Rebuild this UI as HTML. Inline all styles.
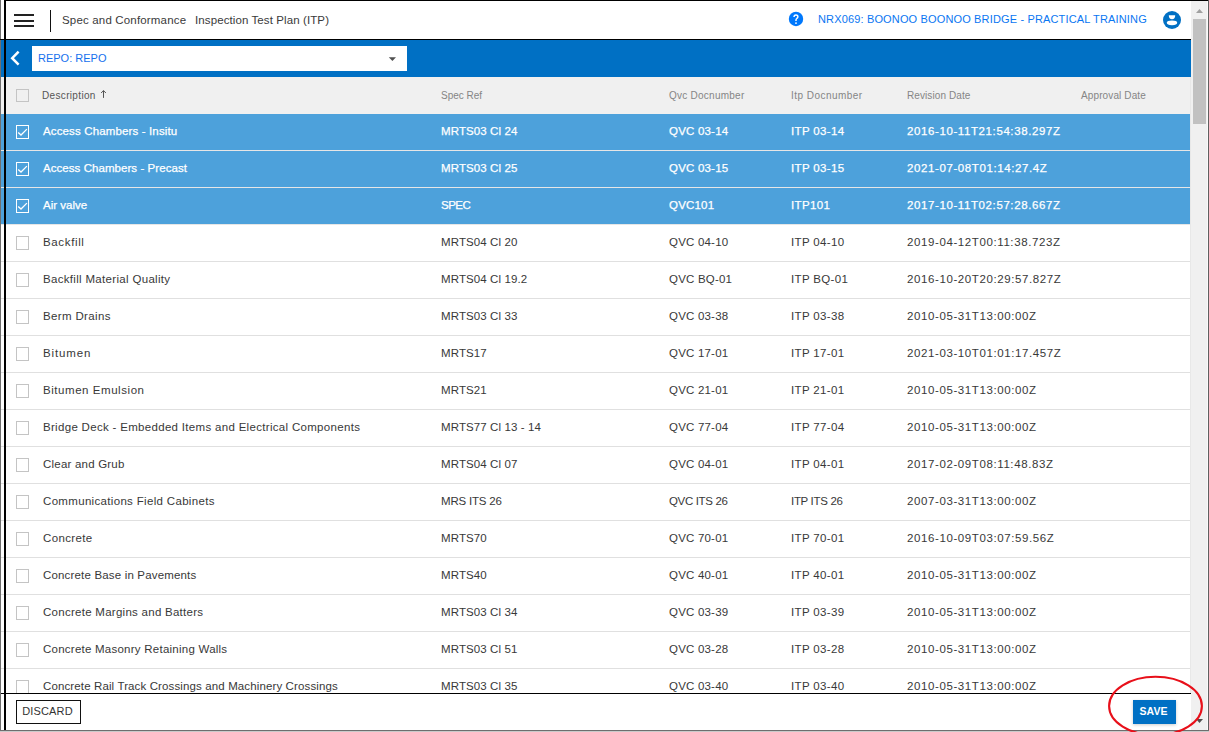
<!DOCTYPE html>
<html><head><meta charset="utf-8"><style>
*{margin:0;padding:0;box-sizing:border-box}
html,body{width:1209px;height:732px;overflow:hidden;background:#fff;font-family:"Liberation Sans",sans-serif}
.abs{position:absolute}
#top{position:absolute;left:0;top:0;width:1191px;height:40px;background:#fff}
.ham{position:absolute;left:14px;width:20px;height:2px;background:#222}
#vsep{position:absolute;left:50px;top:10px;width:1px;height:22px;background:#111}
.title{position:absolute;top:12px;font-size:11.5px;color:#3a3a3a;white-space:pre;line-height:16px;letter-spacing:0.17px}
#proj{position:absolute;left:818px;top:11px;font-size:11px;color:#0a76f2;white-space:pre;line-height:16px;letter-spacing:0.15px}
#bluebar{position:absolute;left:0;top:40px;width:1191px;height:37px;background:#0070c4}
#repo{position:absolute;left:32px;top:46px;width:375px;height:25px;background:#fff}
#repo span{position:absolute;left:6px;top:4px;font-size:11px;color:#1570ee;line-height:16px}
#thead{position:absolute;left:0;top:77px;width:1190px;height:37px;background:#f0f0f0}
.h{position:absolute;top:12px;font-size:10px;color:#858585;line-height:14px;white-space:pre}
.row{position:absolute;left:0;width:1190px;height:37px;background:#fff;border-bottom:1px solid #e0e0e0}
.row.sel{background:#4da1db;border-bottom:1px solid #e6e6e6}
.c{position:absolute;top:9px;font-size:11.5px;line-height:16px;color:#383838;white-space:pre}
.sel .c{color:#fff;-webkit-text-stroke:0.25px #fff}
.cb{position:absolute;left:16px;top:11px;width:13px;height:13px;border:1px solid #c4c4c4;background:transparent}
.sel .cb{border:1.5px solid #fff;background:transparent}
.ck{position:absolute;left:16px;top:11px}
#footer{position:absolute;left:0;top:694px;width:1191px;height:36px;background:#fff}
#fline{position:absolute;left:0;top:693px;width:1191px;height:1px;background:#000}
#discard{position:absolute;left:16px;top:700px;width:65px;height:24px;border:1px solid #111;font-size:11px;color:#333;text-align:center;line-height:20px;padding-right:2px;background:#fff;letter-spacing:0.15px}
#save{position:absolute;left:1133px;top:700px;width:43px;height:24px;background:#0070c4;color:#fff;font-size:10.5px;font-weight:bold;text-align:center;line-height:22px;padding-right:2px;box-shadow:0 1px 3px rgba(0,0,0,.2)}
#sb{position:absolute;left:1191px;top:0;width:17px;height:730px;background:#f0f0f0}
#thumb{position:absolute;left:1193px;top:19px;width:13px;height:105px;background:#c1c1c1}
</style></head><body>
<div id="top">
 <div class="ham" style="top:14px"></div><div class="ham" style="top:20px"></div><div class="ham" style="top:25px"></div>
 <div id="vsep"></div>
 <div class="title" style="left:62px">Spec and Conformance</div><div class="title" style="left:195px;letter-spacing:0.1px">Inspection Test Plan (ITP)</div>
 <svg class="abs" style="left:788px;top:11px" width="16" height="16" viewBox="0 0 16 16"><circle cx="8" cy="7.95" r="7.2" fill="#0078fc"/><path d="M6 6.1 C6 4.7 6.9 3.9 8 3.9 C9.1 3.9 9.9 4.7 9.9 5.7 C9.9 6.7 9.2 7.1 8.7 7.5 C8.1 7.9 8 8.3 8 9.2 V9.9" fill="none" stroke="#fff" stroke-width="1.45"/><circle cx="8" cy="12.1" r="0.95" fill="#fff"/></svg>
 <div id="proj">NRX069: BOONOO BOONOO BRIDGE - PRACTICAL TRAINING</div>
 <svg class="abs" style="left:1163px;top:11px" width="18" height="18" viewBox="0 0 18 18"><circle cx="9" cy="9" r="9" fill="#0070c4"/><path d="M5.8 4.2 H12.2 Q12.2 8.2 9 8.2 Q5.8 8.2 5.8 4.2Z" fill="#fff"/><ellipse cx="9" cy="11.8" rx="5.2" ry="2.4" fill="#fff"/></svg>
</div>
<div id="bluebar">
 <svg class="abs" style="left:9px;top:10px" width="12" height="16" viewBox="0 0 12 16"><path d="M9.6 1.6 L3.2 8.2 L9.6 14.6" fill="none" stroke="#fff" stroke-width="2.5"/></svg>
</div>
<div id="repo"><span>REPO: REPO</span>
 <svg class="abs" style="left:356px;top:11px" width="9" height="5" viewBox="0 0 9 5"><path d="M0.8 0.2 L8 0.2 L4.4 4.1Z" fill="#505050"/></svg>
</div>
<div id="thead">
 <div class="cb" style="top:12px"></div>
 <span class="h" style="left:42px;color:#555;letter-spacing:0.34px">Description</span><svg class="abs" style="left:100px;top:13px" width="7" height="9" viewBox="0 0 7 9"><path d="M3.5 0.6 V7.9 M1.1 3 L3.5 0.6 L5.9 3" fill="none" stroke="#555" stroke-width="1"/></svg>
 <span class="h" style="left:441px">Spec Ref</span>
 <span class="h" style="left:669px;letter-spacing:0.25px">Qvc Docnumber</span>
 <span class="h" style="left:791px;letter-spacing:0.46px">Itp Docnumber</span>
 <span class="h" style="left:907px;letter-spacing:0.09px">Revision Date</span>
 <span class="h" style="left:1081px;letter-spacing:0.12px">Approval Date</span>
</div>
<div class="row sel" style="top:114px"><div class="cb" style="height:14px"></div><svg class="ck" width="14" height="14" viewBox="0 0 14 14"><path d="M2.2 7.4 L5 10 L10.9 4.1" fill="none" stroke="#fff" stroke-width="1.3"/></svg><span class="c c0" style="left:43px;letter-spacing:0.139px">Access Chambers - Insitu</span><span class="c c1" style="left:441px;letter-spacing:0.1px">MRTS03 Cl 24</span><span class="c c2" style="left:669px;letter-spacing:0.2px">QVC 03-14</span><span class="c c3" style="left:791px;letter-spacing:0.35px">ITP 03-14</span><span class="c c4" style="left:907px;letter-spacing:0.6px">2016-10-11T21:54:38.297Z</span></div>
<div class="row sel" style="top:151px"><div class="cb" style="height:14px"></div><svg class="ck" width="14" height="14" viewBox="0 0 14 14"><path d="M2.2 7.4 L5 10 L10.9 4.1" fill="none" stroke="#fff" stroke-width="1.3"/></svg><span class="c c0" style="left:43px;letter-spacing:0.058px">Access Chambers - Precast</span><span class="c c1" style="left:441px;letter-spacing:0.1px">MRTS03 Cl 25</span><span class="c c2" style="left:669px;letter-spacing:0.2px">QVC 03-15</span><span class="c c3" style="left:791px;letter-spacing:0.35px">ITP 03-15</span><span class="c c4" style="left:907px;letter-spacing:0.6px">2021-07-08T01:14:27.4Z</span></div>
<div class="row sel" style="top:188px"><div class="cb" style="height:14px"></div><svg class="ck" width="14" height="14" viewBox="0 0 14 14"><path d="M2.2 7.4 L5 10 L10.9 4.1" fill="none" stroke="#fff" stroke-width="1.3"/></svg><span class="c c0" style="left:43px;letter-spacing:0.0px">Air valve</span><span class="c c1" style="left:441px;letter-spacing:-0.5px">SPEC</span><span class="c c2" style="left:669px;letter-spacing:0.2px">QVC101</span><span class="c c3" style="left:791px;letter-spacing:0.35px">ITP101</span><span class="c c4" style="left:907px;letter-spacing:0.6px">2017-10-11T02:57:28.667Z</span></div>
<div class="row" style="top:225px"><div class="cb" style="height:14px"></div><span class="c c0" style="left:43px;letter-spacing:0.643px">Backfill</span><span class="c c1" style="left:441px;letter-spacing:0.1px">MRTS04 Cl 20</span><span class="c c2" style="left:669px;letter-spacing:0.2px">QVC 04-10</span><span class="c c3" style="left:791px;letter-spacing:0.35px">ITP 04-10</span><span class="c c4" style="left:907px;letter-spacing:0.6px">2019-04-12T00:11:38.723Z</span></div>
<div class="row" style="top:262px"><div class="cb" style="height:14px"></div><span class="c c0" style="left:43px;letter-spacing:0.317px">Backfill Material Quality</span><span class="c c1" style="left:441px;letter-spacing:0.1px">MRTS04 Cl 19.2</span><span class="c c2" style="left:669px;letter-spacing:0.2px">QVC BQ-01</span><span class="c c3" style="left:791px;letter-spacing:0.35px">ITP BQ-01</span><span class="c c4" style="left:907px;letter-spacing:0.6px">2016-10-20T20:29:57.827Z</span></div>
<div class="row" style="top:299px"><div class="cb" style="height:14px"></div><span class="c c0" style="left:43px;letter-spacing:0.35px">Berm Drains</span><span class="c c1" style="left:441px;letter-spacing:0.1px">MRTS03 Cl 33</span><span class="c c2" style="left:669px;letter-spacing:0.2px">QVC 03-38</span><span class="c c3" style="left:791px;letter-spacing:0.35px">ITP 03-38</span><span class="c c4" style="left:907px;letter-spacing:0.6px">2010-05-31T13:00:00Z</span></div>
<div class="row" style="top:336px"><div class="cb" style="height:14px"></div><span class="c c0" style="left:43px;letter-spacing:0.867px">Bitumen</span><span class="c c1" style="left:441px;letter-spacing:0.1px">MRTS17</span><span class="c c2" style="left:669px;letter-spacing:0.2px">QVC 17-01</span><span class="c c3" style="left:791px;letter-spacing:0.35px">ITP 17-01</span><span class="c c4" style="left:907px;letter-spacing:0.6px">2021-03-10T01:01:17.457Z</span></div>
<div class="row" style="top:373px"><div class="cb" style="height:14px"></div><span class="c c0" style="left:43px;letter-spacing:0.553px">Bitumen Emulsion</span><span class="c c1" style="left:441px;letter-spacing:0.1px">MRTS21</span><span class="c c2" style="left:669px;letter-spacing:0.2px">QVC 21-01</span><span class="c c3" style="left:791px;letter-spacing:0.35px">ITP 21-01</span><span class="c c4" style="left:907px;letter-spacing:0.6px">2010-05-31T13:00:00Z</span></div>
<div class="row" style="top:410px"><div class="cb" style="height:14px"></div><span class="c c0" style="left:43px;letter-spacing:0.311px">Bridge Deck - Embedded Items and Electrical Components</span><span class="c c1" style="left:441px;letter-spacing:0.1px">MRTS77 Cl 13 - 14</span><span class="c c2" style="left:669px;letter-spacing:0.2px">QVC 77-04</span><span class="c c3" style="left:791px;letter-spacing:0.35px">ITP 77-04</span><span class="c c4" style="left:907px;letter-spacing:0.6px">2010-05-31T13:00:00Z</span></div>
<div class="row" style="top:447px"><div class="cb" style="height:14px"></div><span class="c c0" style="left:43px;letter-spacing:0.208px">Clear and Grub</span><span class="c c1" style="left:441px;letter-spacing:0.1px">MRTS04 Cl 07</span><span class="c c2" style="left:669px;letter-spacing:0.2px">QVC 04-01</span><span class="c c3" style="left:791px;letter-spacing:0.35px">ITP 04-01</span><span class="c c4" style="left:907px;letter-spacing:0.6px">2017-02-09T08:11:48.83Z</span></div>
<div class="row" style="top:484px"><div class="cb" style="height:14px"></div><span class="c c0" style="left:43px;letter-spacing:0.325px">Communications Field Cabinets</span><span class="c c1" style="left:441px;letter-spacing:-0.2px">MRS ITS 26</span><span class="c c2" style="left:669px;letter-spacing:-0.35px">QVC ITS 26</span><span class="c c3" style="left:791px;letter-spacing:-0.32px">ITP ITS 26</span><span class="c c4" style="left:907px;letter-spacing:0.6px">2007-03-31T13:00:00Z</span></div>
<div class="row" style="top:521px"><div class="cb" style="height:14px"></div><span class="c c0" style="left:43px;letter-spacing:0.343px">Concrete</span><span class="c c1" style="left:441px;letter-spacing:0.1px">MRTS70</span><span class="c c2" style="left:669px;letter-spacing:0.2px">QVC 70-01</span><span class="c c3" style="left:791px;letter-spacing:0.35px">ITP 70-01</span><span class="c c4" style="left:907px;letter-spacing:0.6px">2016-10-09T03:07:59.56Z</span></div>
<div class="row" style="top:558px"><div class="cb" style="height:14px"></div><span class="c c0" style="left:43px;letter-spacing:0.172px">Concrete Base in Pavements</span><span class="c c1" style="left:441px;letter-spacing:0.1px">MRTS40</span><span class="c c2" style="left:669px;letter-spacing:0.2px">QVC 40-01</span><span class="c c3" style="left:791px;letter-spacing:0.35px">ITP 40-01</span><span class="c c4" style="left:907px;letter-spacing:0.6px">2010-05-31T13:00:00Z</span></div>
<div class="row" style="top:595px"><div class="cb" style="height:14px"></div><span class="c c0" style="left:43px;letter-spacing:0.27px">Concrete Margins and Batters</span><span class="c c1" style="left:441px;letter-spacing:0.1px">MRTS03 Cl 34</span><span class="c c2" style="left:669px;letter-spacing:0.2px">QVC 03-39</span><span class="c c3" style="left:791px;letter-spacing:0.35px">ITP 03-39</span><span class="c c4" style="left:907px;letter-spacing:0.6px">2010-05-31T13:00:00Z</span></div>
<div class="row" style="top:632px"><div class="cb" style="height:14px"></div><span class="c c0" style="left:43px;letter-spacing:0.242px">Concrete Masonry Retaining Walls</span><span class="c c1" style="left:441px;letter-spacing:0.1px">MRTS03 Cl 51</span><span class="c c2" style="left:669px;letter-spacing:0.2px">QVC 03-28</span><span class="c c3" style="left:791px;letter-spacing:0.35px">ITP 03-28</span><span class="c c4" style="left:907px;letter-spacing:0.6px">2010-05-31T13:00:00Z</span></div>
<div class="row" style="top:669px"><div class="cb" style="height:14px"></div><span class="c c0" style="left:43px;letter-spacing:0.125px">Concrete Rail Track Crossings and Machinery Crossings</span><span class="c c1" style="left:441px;letter-spacing:0.1px">MRTS03 Cl 35</span><span class="c c2" style="left:669px;letter-spacing:0.2px">QVC 03-40</span><span class="c c3" style="left:791px;letter-spacing:0.35px">ITP 03-40</span><span class="c c4" style="left:907px;letter-spacing:0.6px">2010-05-31T13:00:00Z</span></div>
<div class="abs" style="left:1190px;top:77px;width:1px;height:616px;background:#e8e8e8"></div>
<div id="footer"></div>
<div id="fline"></div>
<div id="discard">DISCARD</div>
<div id="save">SAVE</div>
<div id="sb">
 <svg class="abs" style="left:4px;top:8px" width="9" height="6" viewBox="0 0 9 6"><path d="M1 5 L4.5 1 L8 5Z" fill="#a0a0a0"/></svg>
 <svg class="abs" style="left:4px;top:718px" width="9" height="6" viewBox="0 0 9 6"><path d="M1 1 L8 1 L4.5 5Z" fill="#505050"/></svg>
</div>
<div id="thumb"></div>
<!-- frame lines -->
<div class="abs" style="left:0;top:0;width:1px;height:732px;background:#6e6e6e"></div>
<div class="abs" style="left:4px;top:0;width:2px;height:732px;background:#000"></div>
<div class="abs" style="left:4px;top:0;width:1205px;height:1px;background:#000"></div>
<div class="abs" style="left:0;top:39px;width:1191px;height:1px;background:#000"></div>
<div class="abs" style="left:1207px;top:1px;width:1px;height:729px;background:#fafafa"></div><div class="abs" style="left:1208px;top:0;width:1px;height:732px;background:#606060"></div>
<div class="abs" style="left:0;top:730px;width:1209px;height:1px;background:#6e6e6e"></div><div class="abs" style="left:0;top:731px;width:1209px;height:1px;background:#cacaca"></div>
<svg class="abs" style="left:0;top:0" width="1209" height="732"><ellipse cx="1155.5" cy="706" rx="46.4" ry="29.2" fill="none" stroke="#e8101a" stroke-width="2.1"/></svg>
</body></html>
